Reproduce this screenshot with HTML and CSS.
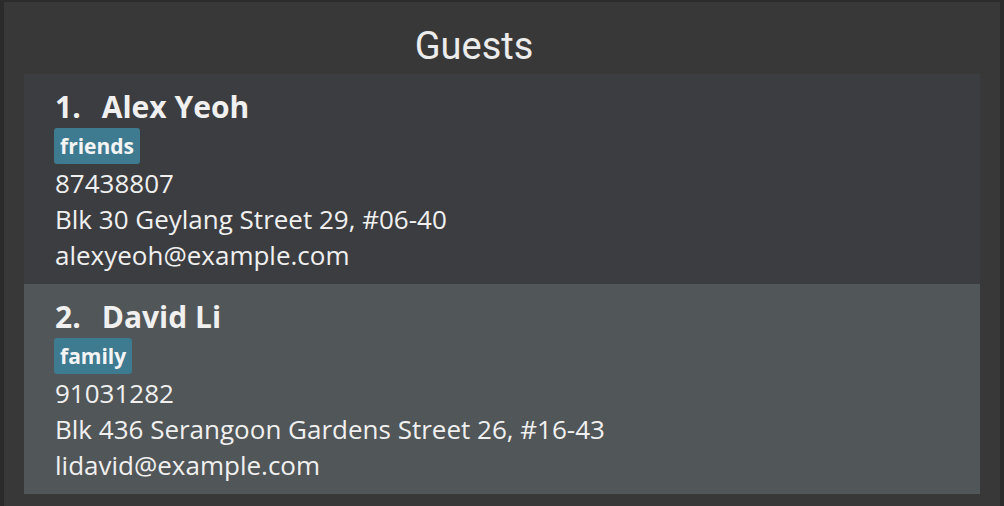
FILE: index.html
```html
<!DOCTYPE html>
<html>
<head>
<meta charset="utf-8">
<link rel="stylesheet" href="styles.css">
</head>
<body>
<div class="panel">
  <h1 class="title">Guests</h1>
  <div class="list">
    <div class="card card-odd">
      <div class="name"><span class="index">1.</span>Alex Yeoh</div>
      <div class="tags"><span class="tag">friends</span></div>
      <div class="detail">87438807</div>
      <div class="detail">Blk 30 Geylang Street 29, #06-40</div>
      <div class="detail">alexyeoh@example.com</div>
    </div>
    <div class="card card-even">
      <div class="name"><span class="index">2.</span>David Li</div>
      <div class="tags"><span class="tag">family</span></div>
      <div class="detail">91031282</div>
      <div class="detail">Blk 436 Serangoon Gardens Street 26, #16-43</div>
      <div class="detail">lidavid@example.com</div>
    </div>
  </div>
</div>
</body>
</html>
```
FILE: styles.css
```css
html, body {
  margin: 0;
  padding: 0;
  height: 100%;
  background: #2b2b2b;
  overflow: hidden;
}
body {
  padding: 2px 4px 0 4px;
  box-sizing: border-box;
}
.panel {
  background: #383838;
  height: 100%;
  padding: 0 20px;
  display: flex;
  flex-direction: column;
}
.title {
  margin: 0;
  padding: 16px 56px 0 0;
  height: 72px;
  box-sizing: border-box;
  font-family: Roboto, "Liberation Sans", sans-serif;
  font-weight: 400;
  font-size: 38px;
  line-height: 56px;
  color: #ececec;
  text-align: center;
}
.list {
  display: flex;
  flex-direction: column;
}
.card {
  padding: 15px 20px 10px 31px;
  height: 210px;
  box-sizing: border-box;
  font-family: "Open Sans", "Liberation Sans", sans-serif;
  color: #f0f0f0;
}
.card-odd { background: #3c3d40; }
.card-even { background: #515658; }
.name {
  font-size: 30px;
  font-weight: 700;
  line-height: 36px;
}
.index {
  margin-right: 21px;
}
.tags {
  display: flex;
  margin-top: 3px;
  margin-bottom: 1px;
  margin-left: -1px;
}
.tag {
  background: #3e7b91;
  color: #f4f4f4;
  font-size: 21px;
  font-weight: 700;
  line-height: 24px;
  padding: 6px 6px;
  border-radius: 3px;
}
.detail {
  font-size: 26px;
  line-height: 36px;
}
```
